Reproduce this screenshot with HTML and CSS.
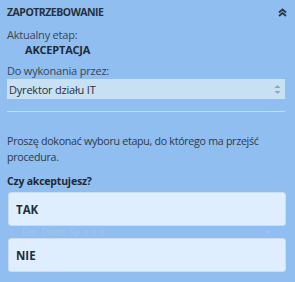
FILE: index.html
```html
<!DOCTYPE html>
<html lang="pl">
<head>
    <meta charset="UTF-8">
    <meta name="viewport" content="width=device-width, initial-scale=1.0">
    <title>Zapotrzebowanie</title>
    <link rel="stylesheet" href="styles.css">
</head>
<body>

    <div class="panel">
        <div class="panel-header">
            <span class="panel-title">ZAPOTRZEBOWANIE</span>
            <svg class="collapse" width="9" height="9" viewBox="0 0 9 9">
                <path d="M1 4.5 L4.5 1.5 L8 4.5 M1 8 L4.5 5 L8 8" fill="none" stroke="#2c3a48" stroke-width="1.8"/>
            </svg>
        </div>

        <div class="label">Aktualny etap:</div>
        <div class="stage">AKCEPTACJA</div>

        <div class="label label-gap">Do wykonania przez:</div>
        <div class="select">
            <span>Dyrektor działu IT</span>
            <svg class="spinner" width="7" height="11" viewBox="0 0 7 11">
                <path d="M0.5 4 L3.5 1 L6.5 4 Z" fill="#8fa6b8"/>
                <path d="M0.5 7 L3.5 10 L6.5 7 Z" fill="#8fa6b8"/>
            </svg>
        </div>

        <hr class="divider">

        <p class="info">Proszę dokonać wyboru etapu, do którego ma przejść procedura.</p>
        <p class="question">Czy akceptujesz?</p>

        <button class="choice">TAK</button>
        <div class="ghost"><span>Dm, Demo Sp. z o.o.</span><span>▾</span></div>
        <button class="choice">NIE</button>
    </div>

</body>
</html>
```

FILE: styles.css
```css
* {
    margin: 0;
    padding: 0;
    box-sizing: border-box;
}

body {
    background: #90bef0;
    font-family: 'Open Sans', 'Noto Sans', sans-serif;
    color: #2b3540;
    width: 295px;
    height: 282px;
    overflow: hidden;
}

.panel {
    padding: 0 10px 0 7px;
}

.panel-header {
    display: flex;
    justify-content: space-between;
    align-items: center;
    height: 23px;
    padding-top: 1px;
}

.panel-title {
    font-size: 10.5px;
    font-weight: 700;
    color: #26313c;
    letter-spacing: -0.5px;
}

.collapse {
    margin-right: -2px;
}

.label {
    font-size: 11px;
    color: #3a4653;
    margin-top: 4px;
    line-height: 15px;
    letter-spacing: -0.2px;
}

.label-gap {
    margin-top: 6px;
}

.stage {
    font-size: 11px;
    font-weight: 700;
    color: #1f2a35;
    padding-left: 18px;
    line-height: 15px;
    letter-spacing: -0.2px;
}

.select {
    display: flex;
    justify-content: space-between;
    align-items: center;
    height: 20px;
    margin-top: 1px;
    padding: 0 4px 0 2px;
    background: #c7e0f4;
    font-size: 11px;
    color: #26313c;
    letter-spacing: -0.2px;
}

.divider {
    border: none;
    border-top: 1px solid #c2dbf7;
    margin-top: 12px;
}

.info {
    font-size: 10.7px;
    line-height: 16px;
    color: #2f3a46;
    margin-top: 21px;
    letter-spacing: -0.3px;
}

.question {
    font-size: 10.5px;
    font-weight: 700;
    color: #1f2a35;
    margin-top: 8px;
    line-height: 16px;
    letter-spacing: -0.2px;
}

.choice {
    display: block;
    width: 100%;
    height: 34px;
    margin-left: 1px;
    margin-top: 3px;
    padding-left: 7px;
    text-align: left;
    background: #dfeeff;
    border: 1px solid #c9dcf1;
    border-radius: 3px;
    font-family: 'Open Sans', 'Noto Sans', sans-serif;
    font-size: 11.5px;
    font-weight: 700;
    color: #232e39;
}

.ghost {
    display: flex;
    justify-content: space-between;
    align-items: center;
    height: 12px;
    padding: 0 14px 0 15px;
    font-size: 9px;
    line-height: 12px;
    color: #a3c6ec;
}

.choice + .ghost + .choice {
    margin-top: 0;
}
```
